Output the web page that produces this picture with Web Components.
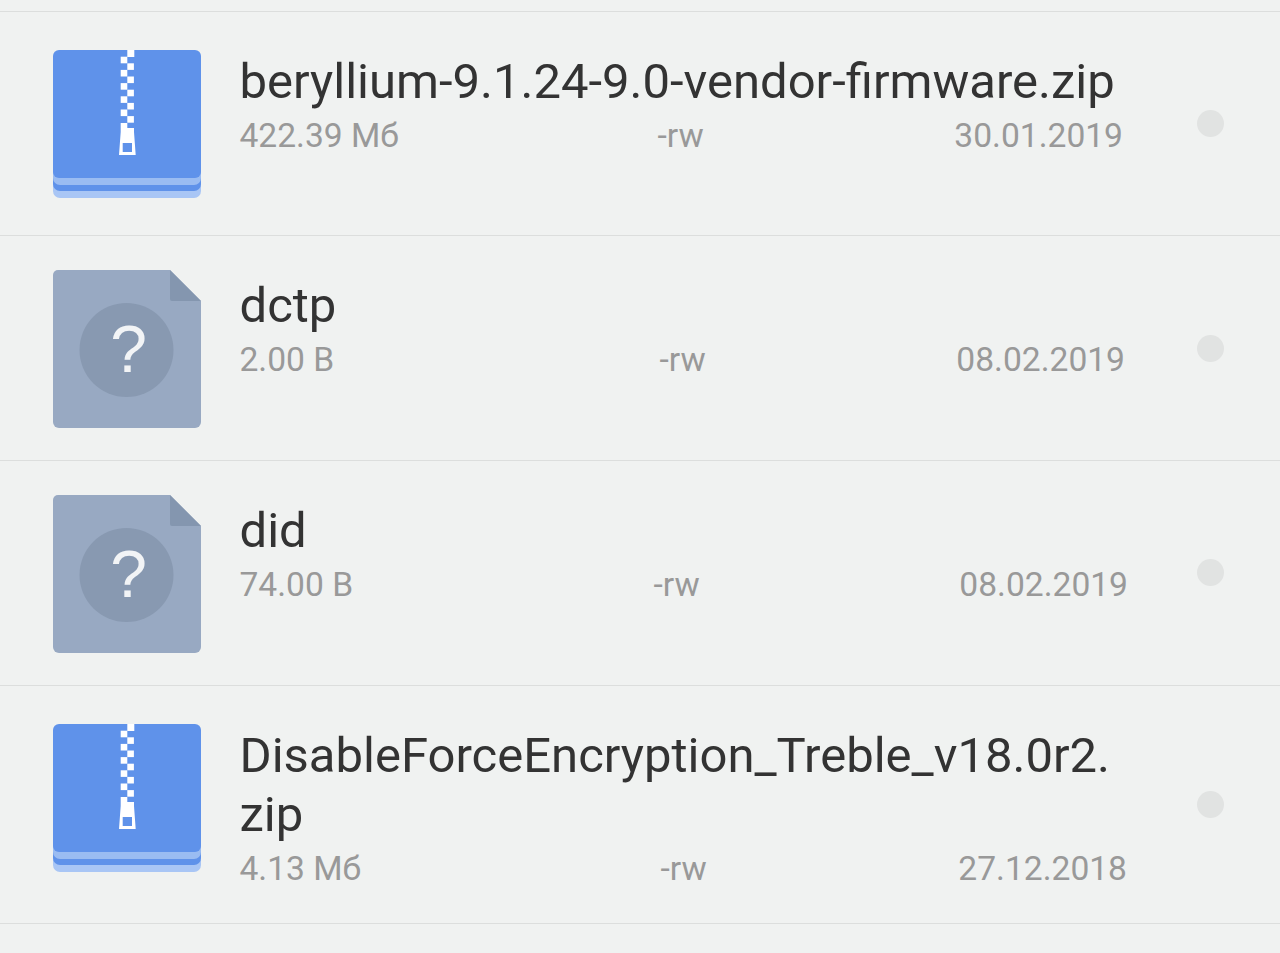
<!DOCTYPE html>
<html lang="ru"><head><meta charset="utf-8"><title>Files</title>
<style>
html,body{margin:0;background:#f0f2f1;height:100%;overflow:hidden}
body{font-family:Roboto,"Liberation Sans",sans-serif}
</style></head><body>
<file-list>
<file-row kind="zip" size="422.39 Мб" perm-x="418" date-end="883.5" date="30.01.2019">beryllium-9.1.24-9.0-vendor-firmware.zip</file-row>
<file-row kind="unknown" size="2.00 B" perm-x="420" date-end="885.5" date="08.02.2019">dctp</file-row>
<file-row kind="unknown" size="74.00 B" perm-x="414" date-end="888.5" date="08.02.2019">did</file-row>
<file-row kind="zip" size="4.13 Мб" perm-x="421" date-end="887.5" date="27.12.2018">DisableForceEncryption_Treble_v18.0r2.<wbr>zip</file-row>
</file-list>
<template id="list-t"><style>
:host{display:block;padding-top:10.9px}
::slotted(file-row){border-top:1px solid #dcdedd}
::slotted(file-row:last-child){border-bottom:1px solid #dcdedd}
</style><slot></slot></template>
<template id="zip-t"><style>:host{display:block;width:148px;height:148px}svg{display:block}</style>
<svg width="148" height="148" viewBox="0 0 148 148" aria-hidden="true">
<rect x="0" y="120" width="148" height="28" rx="7" fill="#a9c6f5"/>
<rect x="0" y="114" width="148" height="27" rx="7" fill="#5f92ea"/>
<rect x="0" y="108" width="148" height="27" rx="7" fill="#9abcf2"/>
<rect x="0" y="0" width="148" height="128" rx="6" fill="#5f92ea"/>
<g fill="#fff">
<rect x="74.300" y="0" width="7" height="7"/>
<rect x="67.700" y="6.700" width="6.600" height="6.600"/><rect x="74.300" y="13.300" width="6.600" height="6.600"/>
<rect x="67.700" y="19.900" width="6.600" height="6.600"/><rect x="74.300" y="26.500" width="6.600" height="6.600"/>
<rect x="67.700" y="33.100" width="6.600" height="6.600"/><rect x="74.300" y="39.700" width="6.600" height="6.600"/>
<rect x="67.700" y="46.300" width="6.600" height="6.600"/><rect x="74.300" y="52.900" width="6.600" height="6.600"/>
<rect x="67.700" y="59.500" width="6.600" height="6.600"/><rect x="74.300" y="66.100" width="6.600" height="6.600"/>
<path fill-rule="evenodd" d="M67.700 73H74.300V78H81V82L82.700 105H66L67.700 82ZM69.700 93V102H79V93Z"/>
</g></svg></template>
<template id="unk-t"><style>
:host{display:block;position:relative;width:148px;height:158px;margin-top:-5px}
svg{display:block}
.q{position:absolute;inset:0 0 0 3px;display:flex;align-items:center;justify-content:center;color:#f2f4f6;font:400 66px/1 "Liberation Sans",sans-serif}
</style><svg width="148" height="158" viewBox="0 0 148 158" aria-hidden="true">
<path d="M5 0H117L148 31V152a6 6 0 0 1-6 6H6a6 6 0 0 1-6-6V5a5 5 0 0 1 5-5Z" fill="#98a9c2"/>
<path d="M117 0L148 31H119a2 2 0 0 1-2-2Z" fill="#8496af"/>
<circle cx="73.500" cy="80" r="47" fill="#8899b1"/>
</svg><div class="q">?</div></template>
<template id="row-t"><style>
:host{display:block;position:relative;box-sizing:border-box;min-height:224.6px;padding:38.5px 0 29px 53px}
.row{display:flex}
.ic{flex:0 0 186.5px}
.txt{flex:0 0 900px;min-width:0;padding-top:1.5px}
.name{font-size:49px;line-height:59px;color:#333;width:890px}
.meta{position:relative;height:50px;font-size:33.6px;line-height:50px;color:#999}
.p,.d{position:absolute;top:0;white-space:nowrap}
.dot{position:absolute;width:27px;height:27px;border-radius:50%;background:#e1e3e2;left:1197px;top:calc(50% - 13.5px)}
</style><div class="row"><div class="ic"></div><div class="txt"><div class="name"><slot></slot></div><div class="meta"><span class="s"></span><span class="p">-rw</span><span class="d"></span></div></div></div><span class="dot"></span></template>
<script>
const tpl=id=>document.getElementById(id).content.cloneNode(true);
class FileList extends HTMLElement{constructor(){super();this.attachShadow({mode:'open'}).append(tpl('list-t'))}}
class ZipIcon extends HTMLElement{constructor(){super();this.attachShadow({mode:'open'}).append(tpl('zip-t'))}}
class UnknownIcon extends HTMLElement{constructor(){super();this.attachShadow({mode:'open'}).append(tpl('unk-t'))}}
class FileRow extends HTMLElement{constructor(){super();this.attachShadow({mode:'open'}).append(tpl('row-t'))}
connectedCallback(){const r=this.shadowRoot,g=k=>this.getAttribute(k);
r.querySelector('.ic').append(document.createElement(g('kind')==='zip'?'zip-icon':'unknown-icon'));
r.querySelector('.s').textContent=g('size');
r.querySelector('.p').style.left=g('perm-x')+'px';
const d=r.querySelector('.d');d.textContent=g('date');d.style.right=(900-+g('date-end'))+'px';}}
customElements.define('zip-icon',ZipIcon);customElements.define('unknown-icon',UnknownIcon);
customElements.define('file-row',FileRow);customElements.define('file-list',FileList);
</script></body></html>
